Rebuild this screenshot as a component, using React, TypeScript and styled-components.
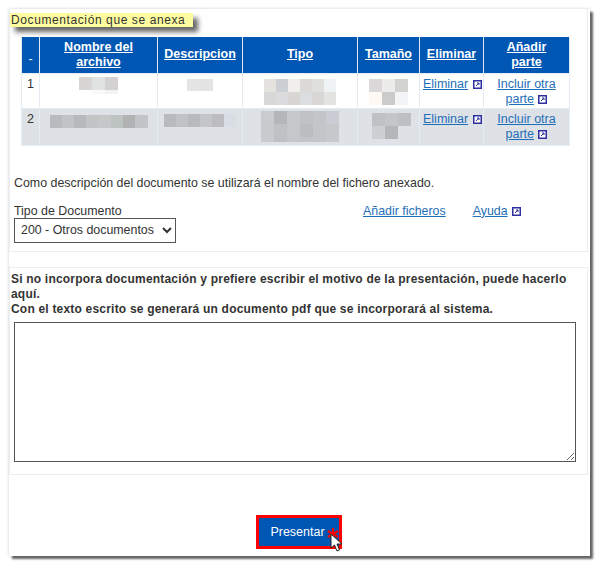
import { createGlobalStyle } from "styled-components";
import styled from "styled-components";

type MosaicData = { cols: number; size: number; rows: string; top: number; left?: number; colors: string[] };

const files: { id: number; name: MosaicData; desc: MosaicData; type: MosaicData; size: MosaicData }[] = [
  {
    id: 1,
    name: {
      cols: 3,
      size: 13,
      rows: "13px 4px",
      top: 3,
      colors: ["#d9d5d5", "#dfe3e1", "#d3d1d1", "transparent", "#f8f9f8", "#f3f3f3"],
    },
    desc: { cols: 2, size: 13, rows: "12px", top: 5, colors: ["#e6e5e5", "#e4e3e3"] },
    type: {
      cols: 6,
      size: 12,
      rows: "13px 13px",
      top: 5,
      colors: ["#e3e2df", "#ccd0d5", "#f0efec", "#dcd9d9", "#dfe0de", "#f0f3f3", "#d8d8d8", "#dbdbdd", "#d8d6d2", "#dcdde0", "#d9d6d6", "#e3e3e1"],
    },
    size: {
      cols: 3,
      size: 13,
      rows: "13px 13px",
      top: 5,
      colors: ["#dad8d9", "#ececeb", "#d2d2d0", "#fff9f6", "#cacbca", "#f3f4f6"],
    },
  },
  {
    id: 2,
    name: {
      cols: 8,
      size: 12.25,
      rows: "13px",
      top: 6,
      colors: ["#b9babe", "#c2c3c7", "#b7b9bc", "#c1c5c6", "#c4c8c8", "#bcc3c1", "#b0b2b4", "#c2c4c8"],
    },
    desc: {
      cols: 6,
      size: 12,
      rows: "13px",
      top: 5,
      colors: ["#b9babe", "#c1c2c6", "#b8babe", "#c4c5c8", "#bdbcbe", "#d9dee5"],
    },
    type: {
      cols: 6,
      size: 13,
      rows: "13px 13px 5px",
      top: 2,
      colors: [
        "#c9cbcf", "#b3b7b9", "#c6c8cc", "#c1c2c5", "#c3c5c8", "#c9ccd2",
        "#c8cace", "#bfc2c5", "#c5c7ca", "#bcbdc0", "#c4c5c8", "#c6c8cc",
        "#c9cbcf", "#bdc0c4", "#c4c6c9", "#c3c4c7", "#c5c6c9", "#c7c9cd",
      ],
    },
    size: {
      cols: 3,
      size: 13,
      rows: "13px 13px",
      top: 4,
      left: 5,
      colors: ["#bfc1c4", "#c3c5c7", "#bdbfc2", "#cdd0d2", "#b5b6b8", "transparent"],
    },
  },
];

const GlobalStyle = createGlobalStyle`
  html, body {
    margin: 0;
    background: #fff;
  }
  body {
    box-sizing: border-box;
    min-height: 565px;
    padding: 9px 0 0 9px;
    font-family: "Liberation Sans", Arial, sans-serif;
    font-size: 12.4px;
    color: #333;
  }
`;

const ExternalIcon = () => (
  <IconSvg viewBox="0 0 9 9" aria-hidden="true">
    <rect x="0" y="0" width="9" height="9" fill="#2f2f9f" />
    <rect x="1.5" y="1.5" width="6" height="6" fill="#fff" />
    <path d="M3 6 L6 3 M4 3 H6 V5" stroke="#2f2f9f" strokeWidth="1" fill="none" />
  </IconSvg>
);

const Blurred = ({ data }: { data: MosaicData }) => (
  <Mosaic $cols={data.cols} $size={data.size} $rows={data.rows} $top={data.top} $left={data.left ?? 0}>
    {data.colors.map((c, i) => (
      <MosaicCell key={i} $color={c} />
    ))}
  </Mosaic>
);

const App = () => {
  return (
    <Frame>
      <GlobalStyle />
      <TopSection>
        <Title>Documentación que se anexa</Title>
        <FileTable>
          <colgroup>
            <WidthCol $w={18} />
            <WidthCol $w={118} />
            <WidthCol $w={85} />
            <WidthCol $w={115} />
            <WidthCol $w={62} />
            <WidthCol $w={64} />
            <WidthCol $w={86} />
          </colgroup>
          <thead>
            <tr>
              <DashCell>-</DashCell>
              <HeadCell><a>Nombre del<br />archivo</a></HeadCell>
              <HeadCell><a>Descripcion</a></HeadCell>
              <HeadCell><a>Tipo</a></HeadCell>
              <HeadCell><a>Tamaño</a></HeadCell>
              <HeadCell><a>Eliminar</a></HeadCell>
              <HeadCell><a>Añadir<br />parte</a></HeadCell>
            </tr>
          </thead>
          <tbody>
            {files.map((f) => (
              <Row key={f.id} $alt={f.id % 2 === 0}>
                <NumCell>{f.id}</NumCell>
                <BlurCell><Blurred data={f.name} /></BlurCell>
                <BlurCell><Blurred data={f.desc} /></BlurCell>
                <BlurCell><Blurred data={f.type} /></BlurCell>
                <BlurCell><Blurred data={f.size} /></BlurCell>
                <LinkCell>
                  <TextLink>Eliminar</TextLink> <ExternalIcon />
                </LinkCell>
                <WrapLinkCell>
                  <TextLink>Incluir otra<br />parte</TextLink> <ExternalIcon />
                </WrapLinkCell>
              </Row>
            ))}
          </tbody>
        </FileTable>
        <Note>Como descripción del documento se utilizará el nombre del fichero anexado.</Note>
        <DocRow>
          <DocField>
            <label>Tipo de Documento</label>
            <DocSelect defaultValue="200">
              <option value="200">200 - Otros documentos</option>
            </DocSelect>
          </DocField>
          <DocLinks>
            <TextLink>Añadir ficheros</TextLink>
            <span>
              <TextLink>Ayuda</TextLink> <ExternalIcon />
            </span>
          </DocLinks>
        </DocRow>
      </TopSection>
      <MotiveSection>
        <MotiveText>
          Si no incorpora documentación y prefiere escribir el motivo de la presentación, puede hacerlo aquí.
          <br />
          Con el texto escrito se generará un documento pdf que se incorporará al sistema.
        </MotiveText>
        <MotiveArea />
      </MotiveSection>
      <Actions>
        <SubmitButton>
          Presentar
          <Marker viewBox="0 0 12 12" aria-hidden="true">
            <path d="M6 0 V12 M0.8 3 L11.2 9 M0.8 9 L11.2 3" stroke="#f00" strokeWidth="2.2" fill="none" />
          </Marker>
          <Cursor viewBox="0 0 13 19" aria-hidden="true">
            <path d="M1 1 L1 15 L4.5 12 L7 18 L9.5 17 L7 11 L12 11 Z" fill="#fff" stroke="#222" strokeWidth="1" />
          </Cursor>
        </SubmitButton>
      </Actions>
    </Frame>
  );
};

const Frame = styled.div`
  box-sizing: border-box;
  width: 581px;
  height: 547px;
  background: #fff;
  box-shadow: 3px 3px 2px #666, 0 0 3px #ccc;
  display: flex;
  flex-direction: column;
`;

const TopSection = styled.section`
  box-sizing: border-box;
  height: 243px;
  margin-right: 2px;
  border: 1px solid #e8eef4;
  border-top: 0;
`;

const Title = styled.h2`
  display: inline-block;
  margin: 4px 0 0 0;
  padding: 0 8px 0 1px;
  height: 14px;
  line-height: 14px;
  font-size: 12px;
  font-weight: normal;
  letter-spacing: 0.6px;
  color: #333;
  background: #fdfd9f;
  box-shadow: 5px 5px 5px #666;
`;

const FileTable = styled.table`
  table-layout: fixed;
  width: 548px;
  margin: 10px 0 0 11px;
  border-collapse: collapse;
  font-size: 12.5px;
`;

const WidthCol = styled.col<{ $w: number }>`
  width: ${(p) => p.$w}px;
`;

const HeadCell = styled.th`
  box-sizing: border-box;
  height: 36px;
  padding: 0 2px;
  background: #0056b3;
  color: #fff;
  border: 1px solid #dfe8f2;
  border-width: 0 1px;
  line-height: 15px;
  font-size: 12.5px;
  font-weight: bold;
  a {
    text-decoration: underline;
  }
`;

const DashCell = styled(HeadCell)`
  padding-top: 9px;
  font-weight: normal;
`;

const Row = styled.tr<{ $alt: boolean }>`
  background: ${(p) => (p.$alt ? "#dee1e6" : "#fff")};
  height: ${(p) => (p.$alt ? 37 : 35)}px;
`;

const Cell = styled.td`
  padding: 3px 3px 0;
  border: 1px solid #e4ebf3;
  vertical-align: top;
  line-height: 15px;
`;

const NumCell = styled(Cell)`
  padding-left: 5px;
`;

const BlurCell = styled(Cell)`
  text-align: center;
  padding: 0;
  line-height: 0;
`;

const LinkCell = styled(Cell)`
  white-space: nowrap;
`;

const WrapLinkCell = styled(Cell)`
  text-align: center;
`;

const Mosaic = styled.div<{ $cols: number; $size: number; $rows: string; $top: number; $left: number }>`
  display: inline-grid;
  grid-template-columns: repeat(${(p) => p.$cols}, ${(p) => p.$size}px);
  grid-template-rows: ${(p) => p.$rows};
  margin: ${(p) => p.$top}px 0 0 ${(p) => p.$left}px;
  vertical-align: top;
`;

const MosaicCell = styled.div<{ $color: string }>`
  background: ${(p) => p.$color};
`;

const TextLink = styled.a`
  color: #1f6fb8;
  text-decoration: underline;
  cursor: pointer;
`;

const IconSvg = styled.svg`
  display: inline-block;
  width: 9px;
  height: 9px;
  margin-left: 1px;
  vertical-align: -1px;
`;

const Note = styled.p`
  margin: 30px 0 0 4px;
  line-height: 14px;
`;

const DocRow = styled.div`
  display: flex;
  margin: 14px 0 0 4px;
`;

const DocField = styled.div`
  display: flex;
  flex-direction: column;
  width: 349px;
  line-height: 14px;
`;

const DocSelect = styled.select`
  box-sizing: border-box;
  width: 162px;
  height: 25px;
  margin-top: 0;
  padding: 0 2px;
  font-family: "Liberation Sans", Arial, sans-serif;
  font-size: 12.4px;
  color: #333;
  background: #fff;
  border: 1px solid #555;
`;

const DocLinks = styled.div`
  display: flex;
  gap: 27px;
  line-height: 14px;
  align-items: flex-start;
`;

const MotiveSection = styled.section`
  box-sizing: border-box;
  height: 208px;
  margin: 15px 2px 0 0;
  padding: 4px 5px 0 1px;
  border: 1px solid #e8eef4;
`;

const MotiveText = styled.p`
  margin: 0;
  font-size: 12px;
  font-weight: bold;
  line-height: 15px;
  letter-spacing: 0.2px;
`;

const MotiveArea = styled.textarea`
  display: block;
  box-sizing: border-box;
  width: 562px;
  height: 140px;
  margin: 5px 0 0 3px;
  border: 1px solid #555;
  background: #fff;
`;

const Actions = styled.div`
  display: flex;
  justify-content: center;
  padding: 40px 1px 0 0;
`;

const SubmitButton = styled.button`
  position: relative;
  box-sizing: border-box;
  width: 86px;
  height: 34px;
  padding: 0 3px 0 0;
  background: #0056b3;
  color: #fff;
  border: 3px solid #f00;
  font-family: "Liberation Sans", Arial, sans-serif;
  font-size: 12.5px;
`;

const Marker = styled.svg`
  position: absolute;
  left: 68px;
  top: 10px;
  width: 12px;
  height: 12px;
`;

const Cursor = styled.svg`
  position: absolute;
  left: 71px;
  top: 15px;
  width: 13px;
  height: 19px;
`;

export default App;
